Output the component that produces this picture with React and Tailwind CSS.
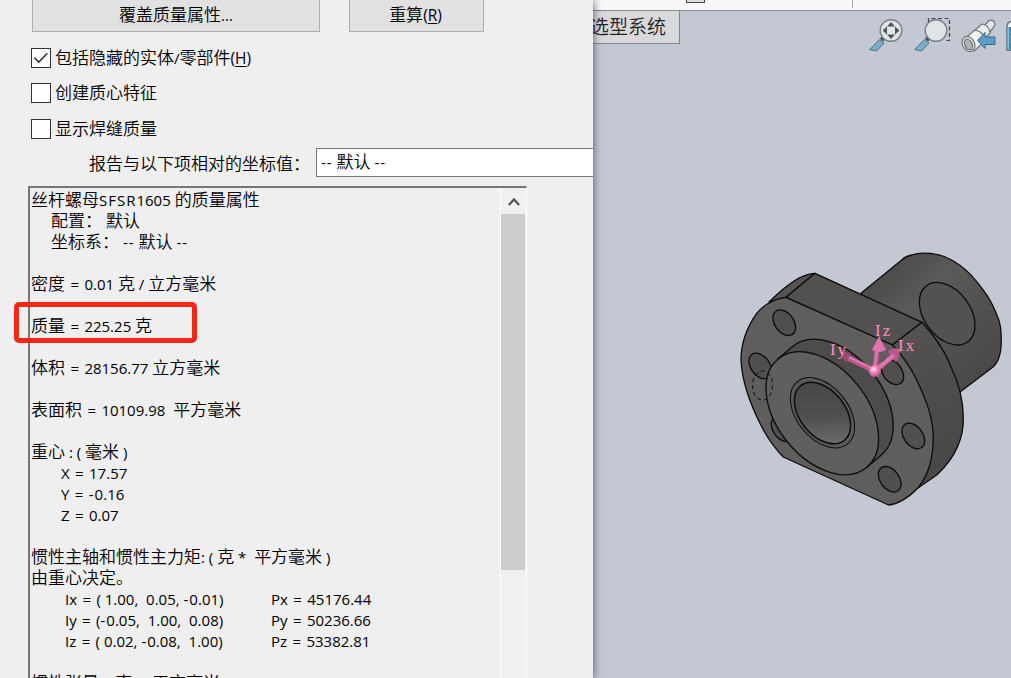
import React from "react";

const CJK = /([\u2e80-\u9fff\u3000-\u303f\uff00-\uffef]+)/;
const WIDE = /(=|-+|[SFR]{2,})/;

// Equals signs, hyphens and capital groups carry a little extra width.
function Latin({ children }) {
  return (
    <span className="text-[15px] font-['Open_Sans',sans-serif]">
      {children.split(WIDE).map((part, i) => {
        if (part === "=") return <span key={i} className="px-[1.5px]">=</span>;
        if (WIDE.test(part)) return <span key={i} className="tracking-[1px]">{part}</span>;
        return part;
      })}
    </span>
  );
}

// Han characters are set slightly larger than the Latin runs beside them.
function Mixed({ children }) {
  return String(children)
    .split(CJK)
    .filter(Boolean)
    .map((run, i) =>
      CJK.test(run) ? (
        <span key={i} className="text-[17px] font-[350] font-['Noto_Sans_CJK_SC',sans-serif]">
          {run}
        </span>
      ) : (
        <Latin key={i}>{run}</Latin>
      )
    );
}

function Row({ indent = "pl-0", children = " " }) {
  const shift = CJK.test(children) ? "-translate-y-px" : "translate-y-px";
  return (
    <div className={`flex h-[21px] items-baseline whitespace-pre leading-[21px] ${indent} ${shift}`}>
      <Mixed>{children}</Mixed>
    </div>
  );
}

function Hot({ k }) {
  return (
    <span className="text-[15.5px] font-['Open_Sans',sans-serif]">
      (<span className="underline underline-offset-2">{k}</span>)
    </span>
  );
}

function Check({ checked, label, hot }) {
  return (
    <div className="flex h-5 items-center gap-1 whitespace-pre leading-5">
      <span className="flex h-5 w-5 shrink-0 items-center justify-center border border-[#333] bg-white">
        {checked && (
          <svg width="18" height="18" viewBox="0 0 18 18" fill="none" stroke="#333" strokeWidth="1.6">
            <path d="M2.5 8.8 6.8 13 15.3 4.2" />
          </svg>
        )}
      </span>
      <span className="flex -translate-y-px items-baseline">
        <Mixed>{label}</Mixed>
        {hot && <Hot k={hot} />}
      </span>
    </div>
  );
}

function Moment({ a, b }) {
  return (
    <div className="flex h-[21px] translate-y-px whitespace-pre pl-[34px] leading-[21px]">
      <span className="w-[206px]">
        <Latin>{a}</Latin>
      </span>
      <Latin>{b}</Latin>
    </div>
  );
}

function Dialog() {
  return (
    <section className="relative z-10 flex h-full w-[593px] shrink-0 flex-col bg-[#efefef] text-black shadow-[1px_0_8px_rgba(50,45,70,0.65)]">
      <div className="flex h-8 shrink-0 pl-8 leading-[28px]">
        <div className="flex h-8 w-[288px] items-baseline justify-center border border-t-0 border-[#adadad] bg-[#e1e1e1]">
          <Mixed>覆盖质量属性...</Mixed>
        </div>
        <div className="ml-[29px] flex h-8 w-[135px] items-baseline justify-center border border-t-0 border-[#adadad] bg-[#e1e1e1] pr-0.5">
          <Mixed>重算</Mixed>
          <Hot k="R" />
        </div>
      </div>
      <div className="flex shrink-0 flex-col pl-[31px] pt-4">
        <Check checked label="包括隐藏的实体/零部件" hot="H" />
        <div className="h-[15px]" />
        <Check label="创建质心特征" />
        <div className="h-4" />
        <Check label="显示焊缝质量" />
      </div>
      <div className="mt-[9px] flex h-[29px] shrink-0 items-center pl-[89px]">
        <span className="flex w-[227px] shrink-0 items-baseline whitespace-pre">
          <Mixed>报告与以下项相对的坐标值：</Mixed>
        </span>
        <div className="flex h-[29px] grow items-baseline whitespace-pre border border-r-0 border-[#777] bg-white pl-1 leading-[24px]">
          <Mixed>-- 默认 --</Mixed>
        </div>
      </div>
      <div className="ml-7 mt-[9px] flex w-[499px] grow overflow-hidden border-l-2 border-r border-t-2 border-l-[#777] border-r-white border-t-[#777]">
        <div className="h-0 w-[470px] shrink-0 pl-px pt-px">
          <Row>丝杆螺母SFSR1605 的质量属性</Row>
          <Row indent="pl-5">配置： 默认</Row>
          <Row indent="pl-5">坐标系： -- 默认 --</Row>
          <Row />
          <Row>密度 = 0.01 克 / 立方毫米</Row>
          <Row />
          <Row>质量 = 225.25 克</Row>
          <Row />
          <Row>体积 = 28156.77 立方毫米</Row>
          <Row />
          <Row>{"表面积 = 10109.98  平方毫米"}</Row>
          <Row />
          <Row>重心 : ( 毫米 )</Row>
          <Row indent="pl-[30px]">X = 17.57</Row>
          <Row indent="pl-[30px]">Y = -0.16</Row>
          <Row indent="pl-[30px]">Z = 0.07</Row>
          <Row />
          <Row>{"惯性主轴和惯性主力矩: ( 克 *  平方毫米 )"}</Row>
          <Row>由重心决定。</Row>
          <Moment a="Ix = ( 1.00,  0.05, -0.01)" b="Px = 45176.44" />
          <Moment a="Iy = (-0.05,  1.00,  0.08)" b="Py = 50236.66" />
          <Moment a="Iz = ( 0.02, -0.08,  1.00)" b="Pz = 53382.81" />
          <Row />
          <Row>{"惯性张量: ( 克 *  平方毫米 )"}</Row>
        </div>
        <div className="flex w-[26px] shrink-0 flex-col border-l border-white bg-[#f0f0f0]">
          <div className="flex h-[26px] items-center justify-center">
            <svg width="12" height="9" viewBox="0 0 12 9" fill="none" stroke="#555" strokeWidth="2.3">
              <path d="M.8 8 6 2.4 11.2 8" />
            </svg>
          </div>
          <div className="h-[356px] w-6 bg-[#cdcdcd]" />
        </div>
      </div>
      <div className="absolute left-[14px] top-[302px] h-[41px] w-[183px] rounded-[5px] border-[5px] border-[#f62716]" />
    </section>
  );
}

function Lens() {
  return (
    <>
      <path d="M10.500 21.500 15 25 7.500 33 .800 31.500Z" fill="#79b0c6" stroke="#4b7186" strokeWidth="1" />
      <path d="M12.500 22 15.500 19" stroke="#444b50" strokeWidth="4.500" />
      <circle cx="22" cy="12.500" r="10.800" fill="#dfe4e7" stroke="#7b8388" strokeWidth="1.400" />
    </>
  );
}

function ViewTools() {
  return (
    <div className="flex h-9 w-[142px] shrink-0 overflow-hidden">
      <svg className="shrink-0" width="45" height="36" viewBox="0 0 45 36">
        <Lens />
        <path d="M22 4 26 8.500H18ZM22 21 26 16.500H18ZM13.500 12.500 18 8.500V16.500ZM30.500 12.500 26 8.500V16.500Z" fill="#4d565d" />
      </svg>
      <svg className="shrink-0" width="47" height="36" viewBox="0 0 47 36">
        <Lens />
        <path d="M14.500 4V.500H35.500V22.500H31" fill="none" stroke="#40464c" strokeWidth="1.200" strokeDasharray="4 2.500" />
      </svg>
      <svg className="shrink-0" width="45" height="36" viewBox="0 0 45 36">
        <g stroke="#70777b" strokeWidth="1.200" strokeLinejoin="round">
          <path d="M22 9 28 2.500Q33 1 34 6Q34 8 32 10L27 16Z" fill="#dfe3e4" />
          <path d="M13 13 21 6Q28 7 29 15L21 23Z" fill="#eceeee" />
          <path d="M2 22 14 12Q24 14 23 24L13 33Z" fill="#f2f3f3" />
          <ellipse cx="7.500" cy="26" rx="6" ry="8" transform="rotate(-28 7.500 26)" fill="#d5d9da" />
          <ellipse cx="7.500" cy="26.500" rx="3.500" ry="5.500" transform="rotate(-28 7.500 26.500)" fill="#aeb6b9" />
        </g>
        <path d="M16.500 22.500 24 14.500V19H34V26.500H24V30.500Z" fill="#5b9fc6" stroke="#356986" strokeWidth="1" />
      </svg>
      <svg className="shrink-0" width="5" height="36" viewBox="0 0 5 36">
        <path d="M6 3Q1 4 1 9V32H6" fill="#eef1f2" stroke="#4f6d7d" strokeWidth="1.300" />
        <path d="M2.500 9H6V31H2.500Z" fill="#3d87ad" />
        <path d="M2.500 14H6M2.500 19H6M2.500 24H6" stroke="#6ba5c1" />
      </svg>
    </div>
  );
}

const holes = [
  [784.3, 322.7],
  [760.3, 366],
  [892.3, 371.9],
  [913.3, 436],
  [889.7, 479.3],
  [782.6, 428.9],
];

function Part() {
  return (
    <svg className="block h-full w-full" viewBox="593 88 418 590" fill="none">
      <defs>
        <linearGradient id="cyl" x1="880" y1="270" x2="985" y2="370" gradientUnits="userSpaceOnUse">
          <stop offset="0" stopColor="#4c4b4a" />
          <stop offset=".35" stopColor="#5b5a59" />
          <stop offset="1" stopColor="#4a4948" />
        </linearGradient>
        <linearGradient id="side" x1="900" y1="340" x2="960" y2="450" gradientUnits="userSpaceOnUse">
          <stop offset="0" stopColor="#535251" />
          <stop offset="1" stopColor="#494847" />
        </linearGradient>
        <linearGradient id="bore" x1="800" y1="400" x2="845" y2="435" gradientUnits="userSpaceOnUse">
          <stop offset="0" stopColor="#4a4947" />
          <stop offset=".5" stopColor="#4f4e4d" />
          <stop offset="1" stopColor="#6c6b6a" />
        </linearGradient>
        <radialGradient id="ball" cx=".4" cy=".35" r=".7">
          <stop offset="0" stopColor="#ffe1f2" />
          <stop offset=".45" stopColor="#ee82ba" />
          <stop offset="1" stopColor="#a84f7e" />
        </radialGradient>
      </defs>
      <g stroke="#0b0b0b" strokeWidth="1.3" strokeLinejoin="round">
        <path
          d="M861 293.300 901.700 260Q906 256 911.700 255C920 252 939 252 953 260.700C962 266 970 273 976.700 281.700C985 292 990 299 993.300 306.700C998 317 1001 324 1001 333C1002 347 1000 361 993 367L960 392 900 380Z"
          fill="url(#cyl)"
        />
        <ellipse cx="947.2" cy="313.7" rx="34.8" ry="23.2" transform="rotate(53.6 947.2 313.7)" fill="#535251" />
        <path d="M769 302C778 293 785 287 793 281.700Q804 274 815 273.300L786 297.300Z" fill="#545352" />
        <path d="M815 273.300 922 322.300 892.300 345 786 297.300Z" fill="#525150" />
        <path
          d="M922 322.300C935 337 945 351 950.500 366C957 379 963 398 963.300 416.700C964 440 955 458 936.700 475L918 488 892.300 345Z"
          fill="url(#side)"
        />
        <path
          d="M786 297.300 892.300 345C903 356 911 368 916.700 380C927 402 933 418 933.300 437C933 459 929 474 918 488C909 497 900 504 888.500 505L783.300 457Q770 443 761.700 426.700C750 404 742 383 741 360C741 342 747 327 756.700 313.300Q769 299 786 297.300Z"
          fill="#5f5e5c"
        />
        {holes.map(([x, y]) => (
          <ellipse key={`${x}-${y}`} cx={x} cy={y} rx="14.2" ry="9.5" transform={`rotate(53.6 ${x} ${y})`} fill="#504f4e" />
        ))}
        <ellipse cx="836.9" cy="400.8" rx="70" ry="45.2" transform="rotate(51.2 836.9 400.8)" fill="#4d4c4a" />
        <path d="M777.700 359.100 792.300 346.700 881.500 454.900 866.900 467.300Z" fill="#4d4c4a" stroke="none" />
        <path d="M777.700 359.100 792.300 346.700M881.500 454.900 866.900 467.300" />
        <ellipse cx="822.3" cy="413.2" rx="70" ry="45.2" transform="rotate(51.2 822.3 413.2)" fill="#605f5d" />
        <ellipse cx="762.5" cy="385.5" rx="10" ry="14.5" strokeDasharray="4 3" strokeWidth="1" />
        <ellipse cx="822.5" cy="412.8" rx="40" ry="25.8" transform="rotate(51.2 822.5 412.8)" strokeWidth="1" fill="#5b5a58" />
        <ellipse cx="822.5" cy="413" rx="35" ry="22.6" transform="rotate(51.2 822.5 413)" strokeWidth="1.5" fill="url(#bore)" />
      </g>
      <g stroke="#b75a8b" strokeWidth="5.500">
        <path d="M875 371 877 349" />
        <path d="M875 371 846 357" />
        <path d="M875 371 893 356" />
      </g>
      <g stroke="#de77ad" strokeWidth="2.500">
        <path d="M874.500 370 877 349M875 370 847 356M875 370 893 355" />
      </g>
      <path d="M879 336 886 350Q879 354 872 350Z" fill="#e075ad" />
      <path d="M839 351 851 353 846 363Z" fill="#9b4873" />
      <path d="M888 351Q893 347 900 349Q900 357 896 362Q891 359 888 351Z" fill="#b75a8b" />
      <path d="M875 371 894 355" stroke="#de77ad" strokeWidth="3.500" />
      <circle cx="875" cy="371" r="6" fill="url(#ball)" />
      <g fill="#ff8bc0" className="text-[17px] tracking-[2px] font-['Liberation_Serif',serif]">
        <text x="875" y="336">Iz</text>
        <text x="830" y="355">Iy</text>
        <text x="898" y="351">Ix</text>
      </g>
    </svg>
  );
}

export default function App() {
  return (
    <main className="flex h-[678px] w-[1011px] overflow-hidden bg-[#c3c8d3]">
      <Dialog />
      <section className="flex w-[418px] shrink-0 flex-col">
        <div className="flex h-[11px] shrink-0 border-b border-[#888b8d] bg-[#f7f8f8] pl-[93px]">
          <div className="h-[3px] w-[19px] border border-t-0 border-[#444650] bg-[#ddd]" />
          <div className="ml-[147px] h-2 w-px bg-[#aaa]" />
        </div>
        <div className="flex h-[77px] shrink-0 justify-between">
          <div className="h-[33px] w-[87px] overflow-hidden whitespace-nowrap border-b border-r border-[#85888a] bg-[#d8d9da] leading-[29px] text-[19px] font-[350] text-[#222] font-['Noto_Sans_CJK_SC',sans-serif]">
            <span className="-ml-[3px]">选型系统</span>
          </div>
          <div className="pt-[7px]">
            <ViewTools />
          </div>
        </div>
        <div className="h-[590px]">
          <Part />
        </div>
      </section>
    </main>
  );
}
